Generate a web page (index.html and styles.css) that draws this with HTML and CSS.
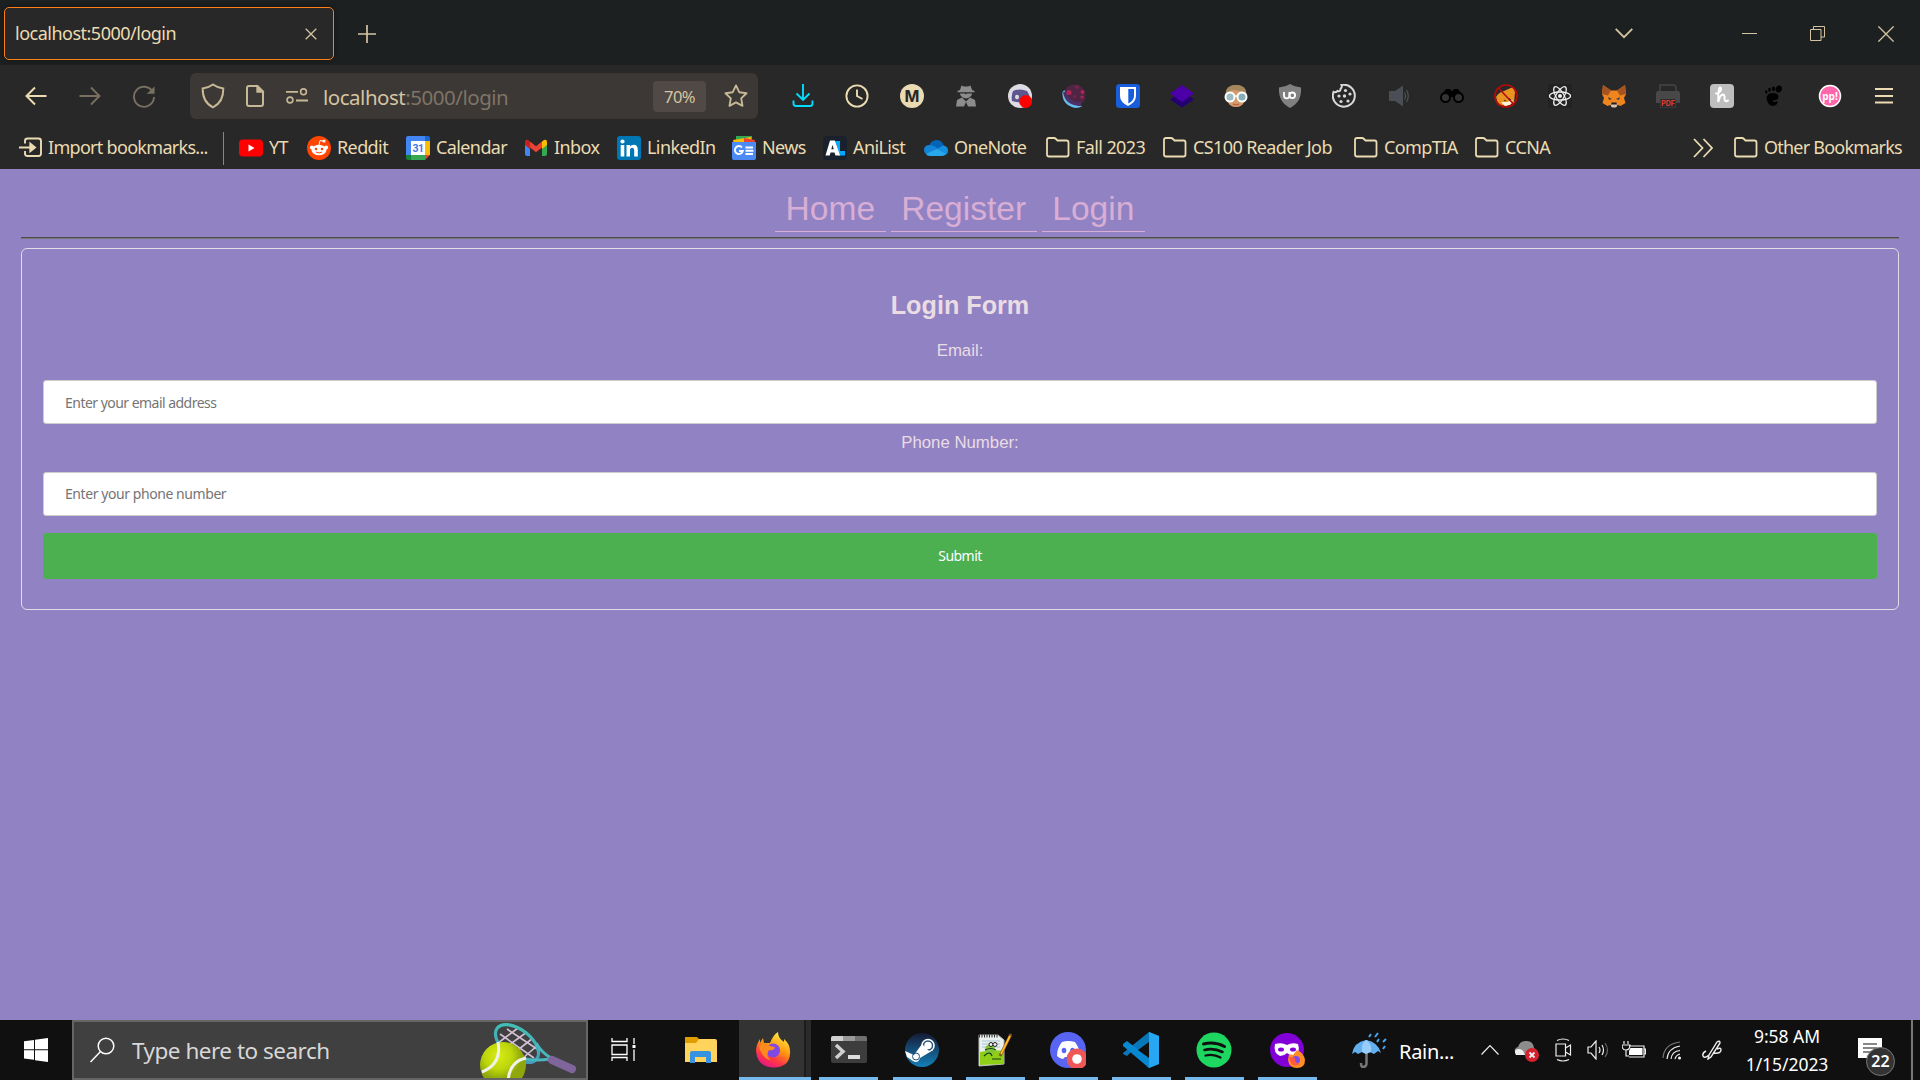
FILE: index.html
```html
<!DOCTYPE html>
<html lang="en">
<head>
<meta charset="utf-8">
<title>localhost:5000/login</title>
<link rel="stylesheet" href="styles.css">
</head>
<body>
<div class="screen">
  <header class="tabbar">
    <div class="tab"><span class="tab-title">localhost:5000/login</span>
      <svg class="line" width="12" height="12" viewBox="0 0 12 12"><path d="M.7.7l10.6 10.6M11.3.7L.7 11.3"/></svg>
    </div>
    <svg class="line new-tab" width="18" height="18" viewBox="0 0 18 18"><path d="M9 0v18M0 9h18" stroke-width="1.7"/></svg>
    <div class="window-controls">
      <svg class="line all-tabs" width="18" height="11" viewBox="0 0 18 11"><path d="M.7.9L9 9.2 17.300.9" stroke-width="1.8"/></svg>
      <svg class="line" width="15" height="15" viewBox="0 0 15 15"><path d="M0 7.500h15" stroke-width="1"/></svg>
      <svg class="line" width="15" height="15" viewBox="0 0 15 15"><path d="M.5 3.500h10.500v11H.5zM3.500 3.500v-3h11v10.500H11" stroke-width="1"/></svg>
      <svg class="line" width="16" height="16" viewBox="0 0 16 16"><path d="M.4.400l15.200 15.200M15.600.400L.400 15.600"/></svg>
    </div>
  </header>

  <div class="toolbar">
    <div class="nav-buttons">
      <svg class="line bright" width="24" height="24" viewBox="0 0 24 24"><path d="M22.500 12H2.500M11 3.500L2.500 12l8.500 8.500" stroke-width="2"/></svg>
      <svg class="line dim" width="24" height="24" viewBox="0 0 24 24"><path d="M1.500 12h20M13 3.500l8.500 8.500-8.500 8.500" stroke-width="1.900"/></svg>
      <svg class="line dim" width="24" height="24" viewBox="0 0 24 24"><path d="M20.500 7.500A10 10 0 1 0 22 13" stroke-width="1.900"/><path d="M22.300 3v6.500h-7z" fill="#777061" stroke-width=".5"/></svg>
    </div>
    <div class="urlbar">
      <svg class="line tan" width="24" height="26" viewBox="0 0 24 26"><path d="M12 1.500c3.200 2.400 6.500 3.400 10.300 3.900C22.500 14 19.500 20.500 12 24.300 4.500 20.500 1.500 14 1.700 5.400 5.500 4.900 8.800 3.900 12 1.500z" stroke-width="2"/></svg>
      <svg class="line tan" width="20" height="24" viewBox="0 0 20 24"><path d="M4 2h8.500L18 7.500V20q0 2-2 2H4q-2 0-2-2V4q0-2 2-2z" stroke-width="2"/><path d="M12 2v6h6z" fill="#c7b896"/></svg>
      <svg class="line tan" width="22" height="16" viewBox="0 0 22 16"><path d="M0 3.800h12M10 12.500h12" stroke-width="1.800"/><circle cx="17.500" cy="3.800" r="2.900" stroke-width="1.600"/><circle cx="4" cy="12" r="2.900" stroke-width="1.600"/></svg>
      <span class="url">localhost<span class="url-rest">:5000/login</span></span>
      <span class="zoom">70%</span>
      <svg class="line tan star" width="24" height="24" viewBox="0 0 24 24"><path d="M12 1.400l3.200 6.800 7.300 1-5.300 5.200 1.300 7.500L12 18.300l-6.500 3.600 1.300-7.500L1.500 9.200l7.300-1z" stroke-width="1.900" stroke-linejoin="round"/></svg>
    </div>
    <div class="extensions">
      <svg class="line" viewBox="0 0 24 24"><path d="M12 0v16M5.500 9.500L12 16l6.500-6.500M2.500 16.500v3q0 2.500 2.500 2.500h14q2.500 0 2.500-2.500v-3" stroke="#00ddff" stroke-width="1.900"/></svg>
      <svg class="line bright" viewBox="0 0 24 24"><circle cx="12" cy="12" r="10.600" stroke-width="1.900"/><path d="M12 5.500V12l5.500 3" stroke-width="1.900"/></svg>
      <svg viewBox="0 0 24 24"><circle cx="12" cy="12" r="12" fill="#ebdbb2"/><text x="12" y="17.500" class="m-letter">M</text></svg>
      <svg viewBox="0 0 24 24" fill="#8c8c8c"><path d="M7.500 1.500L10 2.500h4l2.500-1L18 6l2.500 1v1.300h-17V7L6 6zM6 9.500h5l1 1 1-1h5q0 3.500-6 5-6-1.500-6-5zM3 16l5-2.500 4 4 4-4 5 2.500 1 6.500H14L12 18l-2 4.500H2z"/></svg>
      <svg viewBox="0 0 24 24"><circle cx="12" cy="12" r="12" fill="#dddbe3"/><path d="M5 7q7-3 14 0 4 6 3 10-9 3-18 0Q3 12 5 7z" fill="#5f5690"/><ellipse cx="9" cy="13" rx="2" ry="2.300" fill="#ddd"/><circle cx="17.700" cy="17.500" r="6.500" fill="#f00"/></svg>
      <svg viewBox="0 0 24 24"><circle cx="12.500" cy="11.500" r="11" fill="#502544"/><path d="M.5 8q-1 13 13 16 4 0 7-2Q5 21 2.500 6z" fill="#67bcf0"/><path d="M3 8Q5 20 19 20" fill="none" stroke="#4b3165" stroke-width="4"/><circle cx="7" cy="8.500" r="2.600" fill="#b02458"/><circle cx="12.500" cy="12.500" r="1.500" fill="#752552"/><circle cx="20.500" cy="8" r="2" fill="#b02356"/><circle cx="20" cy="13" r="1.600" fill="#a52556"/><circle cx="15" cy="3" r="2" fill="#74244d"/></svg>
      <svg viewBox="0 0 24 24"><rect width="24" height="24" rx="3.500" fill="#175ddc"/><path d="M4 3h16v9q0 6-8 10Q4 18 4 12z" fill="#fff"/><path d="M12.300 5H18v7q0 4.500-5.700 7.500z" fill="#175ddc"/></svg>
      <svg viewBox="0 0 24 24"><path d="M0 15.500l12-8 12 8-12 8z" fill="#240073"/><path d="M0 9.500L12 1l12 8.500L12 18z" fill="#4b00a8"/></svg>
      <svg viewBox="0 0 24 24"><path d="M3 9q1-8 9-8t9 8l-.5 8q-2 6-8.500 6T3.500 17z" fill="#d59a6b"/><path d="M1.500 10Q1.500 1 12 1t10.500 9L17 7 8 6z" fill="#a4875d"/><circle cx="6" cy="13" r="4.500" fill="#9dbdc0" stroke="#fff" stroke-width="2"/><circle cx="18" cy="13" r="4.500" fill="#85aeb6" stroke="#fff" stroke-width="2"/><path d="M10 12h4" stroke="#fff" stroke-width="1.500"/><path d="M9 20q3 1.500 6 0" stroke="#b85c42" stroke-width="1.200" fill="none"/></svg>
      <svg viewBox="0 0 24 24"><path d="M12 0q4.500 3 11 3.500Q24 18 12 24 0 18 1 3.500 7.500 3 12 0z" fill="#808080"/><path d="M6 8v3.500q0 2.800 2.700 2.800t2.700-2.800V8" fill="none" stroke="#fff" stroke-width="1.800"/><circle cx="14.300" cy="11.300" r="2.800" fill="none" stroke="#fff" stroke-width="1.800"/></svg>
      <svg viewBox="0 0 24 24"><path d="M9.500 1A11 11 0 1 1 1.500 8q2 1 4-1 3 1 3-2 2-2 1-4z" fill="none" stroke="#d8d8d8" stroke-width="2"/><g fill="#d8d8d8"><circle cx="7" cy="12" r="1.600"/><circle cx="13.500" cy="6.500" r="1.600"/><circle cx="12.500" cy="12" r="1.700"/><circle cx="18" cy="10" r="1.600"/><circle cx="9" cy="17.500" r="1.600"/><circle cx="16" cy="17" r="1.600"/></g></svg>
      <svg viewBox="0 0 24 24"><path d="M3 7h6l8-5.500v21L9 17H3z" fill="#4b4f55"/><path d="M18.500 8.500q2 3.500 0 7M20.500 6q3.500 6 0 12" fill="none" stroke="#4b4f55" stroke-width="1.300"/></svg>
      <svg viewBox="0 0 24 24"><path d="M2 10l4-5h4l1.500 2h1L14 5h4l4 5v3H2z" fill="#000"/><circle cx="5.500" cy="13.500" r="4.500" fill="#333" stroke="#000" stroke-width="2"/><circle cx="18.500" cy="13.500" r="4.500" fill="#333" stroke="#000" stroke-width="2"/></svg>
      <svg viewBox="0 0 24 24"><path d="M2 13q3-5 8-6l9-4 2 5-1 11-8 3-8-1z" fill="#e99420"/><path d="M2 13l5 5 6 0 6-2-3 5-5 1z" fill="#fff3dd"/><path d="M6 13q5-1 8-6l4 9-8 1z" fill="#e99420"/><path d="M10 16l2 1M15 14l2 2" stroke="#333"/><circle cx="12" cy="12" r="11" fill="none" stroke="#b30b0b" stroke-width="1.700"/><path d="M4.500 4l15 16" stroke="#b30b0b" stroke-width="1.700"/></svg>
      <svg viewBox="0 0 24 24"><rect width="24" height="24" fill="#222"/><g fill="none" stroke="#eee" stroke-width="1.300"><ellipse cx="12" cy="12" rx="10.500" ry="4"/><ellipse cx="12" cy="12" rx="10.500" ry="4" transform="rotate(60 12 12)"/><ellipse cx="12" cy="12" rx="10.500" ry="4" transform="rotate(120 12 12)"/></g><circle cx="12" cy="12" r="2" fill="#eee"/></svg>
      <svg viewBox="0 0 24 24"><path d="M1 1l8 5.500h6L23 1l1 9-2 4 1.500 5-5 3-4-1.500h-5L5.500 22l-5-3L2 14 0 10z" fill="#f0851e"/><path d="M1 1l8 5.500-3 5L0 10zM23 1l-8 5.500 3 5 6-1.500z" fill="#a55320"/><path d="M6 13l4 2-3 1zM18 13l-4 2 3 1z" fill="#35404b"/><path d="M8.500 19h7l-.5 3.500-1.500 1h-3l-1.500-1z" fill="#d8c3b2"/><path d="M9.500 18.500h5l.5 2H9z" fill="#202020"/></svg>
      <svg viewBox="0 0 24 24"><path d="M4 7V1h14l2 2v4" fill="none" stroke="#454545" stroke-width="1.500"/><path d="M2 7h20q2 0 2 2v10h-4v4.500H4V19H0V9q0-2 2-2z" fill="#484848"/><rect x="4.500" y="15" width="15" height="8" fill="#292929"/><text x="12" y="22" class="pdf-letter">PDF</text></svg>
      <svg viewBox="0 0 24 24"><rect width="24" height="24" rx="4" fill="#bebebe"/><path d="M6 9.500q5-1 5-4.500 0-1.800-1.200-1.500Q8 4 8.300 18q1.700-7.500 4.700-7.500 2 .5 1.500 4-.5 4 3.500 2" fill="none" stroke="#fff" stroke-width="2" stroke-linecap="round"/></svg>
      <svg viewBox="0 0 24 24"><path d="M2.500 14q1-5 6-5 6 0 6 4 0 3-4 3-3 1-1 2 2 0 4-1 1 4-5 5-5-1-6-8z"/><ellipse cx="14.800" cy="5" rx="3" ry="3.600" transform="rotate(25 14.800 5)"/><ellipse cx="9.500" cy="4.800" rx="1.600" ry="2.400"/><ellipse cx="5.500" cy="5.800" rx="1.300" ry="2.100"/><ellipse cx="2.300" cy="8" rx="1.200" ry="1.800"/></svg>
      <svg viewBox="0 0 24 24"><circle cx="12" cy="12" r="10.500" fill="#ff66ab" stroke="#fff" stroke-width="1.500"/><text x="12" y="15.500" class="pp-letter">pp!</text></svg>
      <svg class="line bright" viewBox="0 0 24 24"><path d="M3 5h18M3 12h18M3 18.500h18" stroke-width="1.900"/></svg>
    </div>
  </div>

  <nav class="bookmarks">
    <div class="bookmark import"><svg class="line bright" viewBox="0 0 24 24"><path d="M7 7.500V5q0-2.500 2.500-2.500h11Q23 2.500 23 5v12.500q0 2.500-2.500 2.500h-11Q7 20 7 17.500V15" stroke-width="1.900"/><path d="M1 11.500h14" stroke-width="2"/><path d="M12 7l5.500 4.500L12 16z" fill="#ebdbb2"/></svg><span>Import bookmarks...</span></div>
    <div class="bookmark"><svg viewBox="0 0 24 24"><rect y="3.500" width="24" height="17" rx="4" fill="#f00"/><path d="M9.500 8.500l6 3.500-6 3.500z" fill="#fff"/></svg><span>YT</span></div>
    <div class="bookmark"><svg viewBox="0 0 24 24"><circle cx="12" cy="12" r="12" fill="#ff4500"/><g fill="#fff"><ellipse cx="12" cy="14" rx="7.500" ry="5.200"/><circle cx="4.800" cy="11.500" r="1.900"/><circle cx="19.200" cy="11.500" r="1.900"/><circle cx="17" cy="5" r="1.600"/></g><path d="M12 9l1-4.500 4 .8" fill="none" stroke="#fff"/><g fill="#ff4500"><circle cx="9" cy="13" r="1.300"/><circle cx="15" cy="13" r="1.300"/></g><path d="M9 16q3 2 6 0" stroke="#ff4500" fill="none"/></svg><span>Reddit</span></div>
    <div class="bookmark"><svg viewBox="0 0 24 24"><path d="M2 0h17v5H5v14H0V2q0-2 2-2z" fill="#4285f4"/><path d="M19 0h3q2 0 2 2v3h-5z" fill="#1967d2"/><path d="M19 5h5v14h-5z" fill="#fbbc04"/><path d="M0 19h5v5H2q-2 0-2-2z" fill="#188038"/><path d="M5 19h14v5H5z" fill="#34a853"/><path d="M19 19h5l-5 5z" fill="#ea4335"/><path d="M5 5h14v14H5z" fill="#fff"/><text x="12" y="16" class="cal-letter">31</text></svg><span>Calendar</span></div>
    <div class="bookmark"><svg viewBox="0 0 24 24"><path d="M1 6l5 3.500V20H3q-2 0-2-2z" fill="#4285f4"/><path d="M23 6l-5 3.500V20h3q2 0 2-2z" fill="#34a853"/><path d="M18 5.500l2-1.500q3-1 3 2v3l-5 4z" fill="#fbbc04"/><path d="M6 5.500L4 4Q1 3 1 6v3l5 4z" fill="#c5221f"/><path d="M6 5.500l6 4.700 6-4.700V11.500l-6 4.700-6-4.700z" fill="#ea4335"/></svg><span>Inbox</span></div>
    <div class="bookmark"><svg viewBox="0 0 24 24"><rect width="24" height="24" rx="3" fill="#0077b5"/><g fill="#fff"><circle cx="5.500" cy="5.500" r="2.100"/><path d="M3.700 9h3.600v11.500H3.700zM9.500 9H13v1.600q1.200-1.900 3.600-1.900 4.200 0 4.200 5v6.800h-3.600v-6q0-2.700-1.900-2.700-2.300 0-2.300 2.700v6H9.500z"/></g></svg><span>LinkedIn</span></div>
    <div class="bookmark"><svg viewBox="0 0 24 24"><path d="M4 0h16v6H4z" fill="#34a853"/><path d="M1 4l18-3 1 7H2z" fill="#fbbc04"/><path d="M12 2l11 2-1 5H12z" fill="#ea4335"/><path d="M0 6h24v16q0 2-2 2H2q-2 0-2-2z" fill="#4c8bf5"/><path d="M10 11.500a4 4 0 1 0 .8 3.500H7M13.500 11.500H21M13.500 14.700h8M13.500 18H21" fill="none" stroke="#fff" stroke-width="1.900"/></svg><span>News</span></div>
    <div class="bookmark"><svg viewBox="0 0 24 24"><rect width="24" height="24" rx="4" fill="#19212d"/><path d="M12.500 5H17v10h5v4.500h-6z" fill="#02a9ff"/><path fill-rule="evenodd" d="M7 4.500h5l5 15h-4.500l-1-3h-4l-.8 3H2.500zM9.500 9l-1.200 4.300h2.500z" fill="#fff"/></svg><span>AniList</span></div>
    <div class="bookmark"><svg viewBox="0 0 24 24"><path d="M5 10q2-6 8-6 5 0 7 6l-8 5z" fill="#0364b8"/><path d="M5 19Q0 18 0 14q0-5 6-5 4 0 9 5z" fill="#1484d7"/><path d="M13 13l6-3.500q5 .5 5 5t-5 5z" fill="#1490df"/><path d="M2 18l11-5 9 5q-2 2-4 2H6q-3 0-4-2z" fill="#28a8ea"/></svg><span>OneNote</span></div>
    <div class="bookmark"><svg class="line bright folder"><use href="#folder"/></svg><span>Fall 2023</span></div>
    <div class="bookmark"><svg class="line bright folder"><use href="#folder"/></svg><span>CS100 Reader Job</span></div>
    <div class="bookmark"><svg class="line bright folder"><use href="#folder"/></svg><span>CompTIA</span></div>
    <div class="bookmark"><svg class="line bright folder"><use href="#folder"/></svg><span>CCNA</span></div>
    <svg class="line bright more" width="20" height="20" viewBox="0 0 20 20"><path d="M1 1l8.500 9L1 19M10.500 1l8.500 9-8.500 9" stroke-width="1.800"/></svg>
    <div class="bookmark other"><svg class="line bright folder" viewBox="0 0 24 24"><g id="folder"><path d="M1 18.500V4q0-2 2-2h5q1 0 2 1l1.500 1.500h9q2 0 2 2v12q0 2-2 2H3q-2 0-2-2z" stroke-width="1.800"/></g></svg><span>Other Bookmarks</span></div>
  </nav>

  <main class="page">
    <div class="links"><a>Home</a><a>Register</a><a>Login</a></div>
    <hr>
    <form class="login-form">
      <h2>Login Form</h2>
      <label>Email:</label>
      <input type="text" placeholder="Enter your email address">
      <label>Phone Number:</label>
      <input type="text" placeholder="Enter your phone number" class="phone">
      <button type="button">Submit</button>
    </form>
  </main>

  <footer class="taskbar">
    <div class="start"><svg width="24" height="24" viewBox="0 0 24 24" fill="#fff"><path d="M0 3.300L10 2v9.300H0zM11 1.800L24 0v11.300H11zM0 12.300h10v9.500L0 20.500zM11 12.300h13V24l-13-1.800z"/></svg></div>
    <div class="search">
      <svg width="26" height="26" viewBox="0 0 26 26" fill="none" stroke="#fff" stroke-width="1.500"><circle cx="16" cy="9" r="7.800"/><path d="M10.500 14.500L.500 25"/></svg>
      <span>Type here to search</span>
      <svg class="tennis" width="98" height="56" viewBox="0 -2 98 56">
        <defs><radialGradient id="ball" cx=".4" cy=".3"><stop stop-color="#d9ec13"/><stop offset=".6" stop-color="#bdd60c"/><stop offset="1" stop-color="#8fa70c"/></radialGradient><linearGradient id="hoop" x2="1" y2="1"><stop stop-color="#3fc6b4"/><stop offset="1" stop-color="#4694bd"/></linearGradient></defs>
        <path d="M20 10l34 24M27 5l33 22M17 17l30 21M38 4L18 19M47 8L25 24M53 14L34 29M58 21L43 34" stroke="#d2c0d5" stroke-width="1.600"/>
        <ellipse cx="37" cy="19.500" rx="25" ry="14" transform="rotate(38 37 19.500)" fill="none" stroke="url(#hoop)" stroke-width="3.200"/>
        <path d="M56 19q6 10 15 15M45 35q12 2 25 0" stroke="#48b6bd" stroke-width="3" fill="none"/>
        <path d="M72 36l20 9" stroke="#80649c" stroke-width="8" stroke-linecap="round"/>
        <circle cx="23" cy="41" r="23" fill="url(#ball)"/><path d="M18 18q4 22-16 30M46 34Q28 38 28 60" fill="none" stroke="#f0f2e8" stroke-width="3"/>
      </svg>
    </div>
    <div class="apps">
      <div class="app"><svg viewBox="0 0 36 36" fill="none" stroke="#fff" stroke-width="1.300"><path d="M6 6v3.500h15V6M6 29v-3.500h15V29M6 13h15v9.500H6zM28 6v6M28 17.500V29"/><path d="M26.500 13h3v3h-3z" fill="#fff" stroke="none"/></svg></div>
      <div class="app"><svg viewBox="0 0 36 36"><path d="M4 5h12l3 3-2 4H4z" fill="#e09d00"/><path d="M4 11h11l3-4h16q2 0 2 2v21H4z" fill="#ffd35c"/><path d="M9 31V21q0-2 2-2h17q2 0 2 2v10h-5v-6H14v6z" fill="#3792df"/></svg></div>
      <div class="app active"><svg viewBox="0 0 36 36"><defs><linearGradient id="fire" x1=".8" y1="0" x2=".3" y2="1"><stop stop-color="#fff44f"/><stop offset=".45" stop-color="#ff980e"/><stop offset=".75" stop-color="#ff3647"/><stop offset="1" stop-color="#e31587"/></linearGradient></defs><path d="M23 0q0 6 6 10v-3q7 6 6 15-1 13-16 13.500Q2 35 1 19q0-6 4-12v4l3-5 1 5h6q3-8 8-11z" fill="url(#fire)"/><circle cx="18" cy="18.500" r="7" fill="#8049e6"/><path d="M4 14q6-3 9-1 4 2 7 2-1 4-6 3-4 6 2 10Q7 27 4 14z" fill="#ff8b1c"/></svg></div>
      <div class="app running"><svg viewBox="0 0 36 36"><rect y="4" width="36" height="27" rx="2" fill="#3d3d3d"/><path d="M0 9V6q0-2 2-2h10v5z" fill="#d0d0d0"/><path d="M12 4h12v5H12z" fill="#999"/><path d="M24 4h10q2 0 2 2v3H24z" fill="#707070"/><path d="M5 13l7 6.500L5 26" fill="none" stroke="#d0d0d0" stroke-width="3.500"/><path d="M17 23h12v4H17z" fill="#ddd"/></svg></div>
      <div class="app running"><svg viewBox="0 0 36 36"><defs><linearGradient id="steam" x2="0" y2="1"><stop stop-color="#171a36"/><stop offset="1" stop-color="#1480b8"/></linearGradient></defs><circle cx="18" cy="18" r="17" fill="url(#steam)"/><circle cx="24" cy="13.500" r="6.800" fill="#fff"/><circle cx="24" cy="13.500" r="4.500" fill="none" stroke="#27517a" stroke-width="1.500"/><path d="M1 19l9 4 8-11 8 8-10 6q-2 6-7 3L3 25z" fill="#fff"/><circle cx="12" cy="24.500" r="3.500" fill="none" stroke="#27517a" stroke-width="1"/></svg></div>
      <div class="app running"><svg viewBox="0 0 36 36"><path d="M2 3h19l6 5v24L2 34z" fill="#e9f0ee" stroke="#bbb"/><path d="M3 20q12-3 24-1v13L3 33z" fill="#8fcf18"/><path d="M2 4h20" stroke="#333" stroke-width="3" stroke-dasharray="1 1.500"/><path d="M5 9h18M5 12h18M5 15h18" stroke="#a7c7d9"/><circle cx="13" cy="17.500" r="5" fill="#81c43c"/><g fill="#eee" stroke="#222"><circle cx="14" cy="12.500" r="2"/><circle cx="18" cy="12.500" r="2"/></g><path d="M8 18q6-3 11 0M7 24q6-6 8 0M15 27h9" fill="none" stroke="#183a10" stroke-width="1.200"/><path d="M34 2L23 24" stroke="#8b5317" stroke-width="3"/><path d="M33 4L24 22" stroke="#ffbd2c" stroke-width="1.800"/></svg></div>
      <div class="app running"><svg viewBox="0 0 36 36"><circle cx="18" cy="18" r="18" fill="#5865f2"/><path d="M12 10q6-2 13 0 5 7 5 14-3 3-6 3l-2-2h-7l-2 2q-3 0-6-3 0-8 5-14z" fill="#fff"/><g fill="#5865f2"><ellipse cx="14" cy="18.500" rx="2.300" ry="2.700"/><ellipse cx="22.500" cy="18.500" rx="2.300" ry="2.700"/></g><circle cx="27" cy="27" r="10.500" fill="#ef5757"/><circle cx="27" cy="27" r="4.800" fill="#fff"/></svg></div>
      <div class="app running"><svg viewBox="0 0 36 36"><path d="M26 0L36 4v28l-10 4L9 19l-5 5-4-2v-1l26-21z" fill="#0877b9"/><path d="M0 14v-2l4-3 5 4 17 13v10L0 14z" fill="#0788d1"/><path d="M26 0l10 4v28l-10 4z" fill="#27a7f2"/><path d="M26 10L15 18l11 8z" fill="#101010"/></svg></div>
      <div class="app running"><svg viewBox="0 0 36 36"><circle cx="18" cy="18" r="17.500" fill="#1ed760"/><g fill="none" stroke="#101010" stroke-linecap="round"><path d="M7.500 12q11-3 21 2.500" stroke-width="3"/><path d="M8.500 18q9-2.500 18 2" stroke-width="2.600"/><path d="M9.500 23.500q8-2 15 2" stroke-width="2.300"/></g></svg></div>
      <div class="app running"><svg viewBox="0 0 36 36"><circle cx="18" cy="18" r="17" fill="#8000d7"/><path d="M18 13q5-3 11-1 3 9-4 12-4 0-7-3-3 3-7 3-7-3-5-12 7-2 12 1z" fill="#fff"/><ellipse cx="12" cy="17.500" rx="3" ry="2" fill="#8000d7"/><ellipse cx="24" cy="17.500" rx="3" ry="2" fill="#8000d7"/><path d="M28 18q7 3 8 10 0 8-8 8t-9-8l1-6 4 1z" fill="#ff8d25"/><circle cx="27" cy="28" r="4" fill="#814bea"/><path d="M20 25l6 1q0 6 5 6-9 5-11-7z" fill="#ff5940"/></svg></div>
    </div>
    <div class="weather"><svg width="36" height="36" viewBox="0 0 36 36"><path d="M14.500 8v23q0 4-3.500 4-2 0-2-4" fill="none" stroke="#777" stroke-width="2.500"/><path d="M0 22Q2 10 14 8q12 2 15 13l-3-2-4 3-4-2-4 2-4-2-4 2-3-2z" fill="#62aff0"/><path d="M10 20Q9 11 14 8q6 3 5 12l-5 2z" fill="#97cdfa"/><path d="M19 2l-2 3M26 1l-3 4M27 7l-2 3M34 7l-3 3M33 14l-2 3" stroke="#46a5ee" stroke-width="2"/></svg><span>Rain...</span></div>
    <div class="tray">
      <svg width="18" height="12" viewBox="0 0 18 12"><path d="M.5 10.500L9 1.500l8.500 9"/></svg>
      <svg width="25" height="24" viewBox="0 0 25 24"><path d="M3 17Q-2 11 4 9q2-7 9-6 6 0 7 7 4 2 3 7z" fill="#8c8c8c" stroke="none"/><path d="M2 17q-3-5 2-6 5-1 7 6z" fill="#eee" stroke="none"/><circle cx="18" cy="17" r="7" fill="#d4212d" stroke="none"/><path d="M15.500 14.500l5 5m0-5l-5 5" stroke-width="1.800"/></svg>
      <svg width="17" height="24" viewBox="0 0 17 24"><path d="M2 2.500q6-3 12 0M2 21.500q6 3 12 0M1 6h9.500v12H1zM10.500 10l5-3v10l-5-3"/></svg>
      <svg width="23" height="20" viewBox="0 0 23 20"><path d="M1 7v6h3l5 6V1L4 7zM12 7q2 3 0 6M15 5q3 5 0 10"/><path d="M18 3q5 7 0 14" stroke="#666"/></svg>
      <svg width="24" height="20" viewBox="0 0 24 20"><path d="M2 1v3M6 1v3M0 5h8q0 5-4 5t-4-5M4 10v6h3M7 6h15v11H7M22 9h1.500v5H22"/><path d="M8.500 8h12v7H7v-4z" fill="#fff" stroke="none"/></svg>
      <svg width="20" height="20" viewBox="0 0 20 20"><path d="M1 18Q2 4 18 2" stroke="#777"/><path d="M5 19Q6 8 18 6M9 19q1-8 9-8.500M13 19q1-4 5-5"/><circle cx="17.500" cy="18" r="1.500" fill="#fff" stroke="none"/></svg>
      <svg width="20" height="20" viewBox="0 0 20 20"><path d="M15 2q3-2 3 1L9 17l-3 2 1-4zM4 11q-4 2-3 5t6-1M11 13q8 1 8-3 0-3-4-1" stroke-width="1.400"/></svg>
    </div>
    <div class="clock"><span>9:58 AM</span><span>1/15/2023</span></div>
    <div class="notices"><svg width="26" height="27" viewBox="0 0 26 27"><path d="M0 0h24v20h-8l-5 5v-5H0z" fill="#fff"/><path d="M5 6h14M5 10h14M5 14h9" stroke="#111" stroke-width="1.200"/></svg><span class="badge">22</span></div>
  </footer>
</div>
</body>
</html>
```
FILE: styles.css
```css
* { box-sizing: border-box; }

body {
  margin: 0;
  background: #9182c3;
  font-family: "Noto Sans", "Open Sans", sans-serif;
}

.screen {
  display: flex;
  flex-direction: column;
  width: 1920px;
  height: 1080px;
  overflow: hidden;
}

svg { display: block; flex: none; }
.line { fill: none; stroke: #d5c4a1; stroke-width: 1.3; }
.line.bright { stroke: #ebdbb2; }
.line.dim { stroke: #777061; }
.line.tan { stroke: #c7b896; }

/* Tab strip */
.tabbar {
  display: flex;
  align-items: center;
  height: 65px;
  padding: 2px 26px 0 4px;
  background: #1d2021;
}
.tab {
  display: flex;
  align-items: center;
  justify-content: space-between;
  width: 330px;
  height: 53px;
  padding: 0 16px 0 10px;
  border: 1px solid #fe8019;
  border-radius: 5px;
  background: #282828;
  box-shadow: 0 0 4px #111;
}
.tab-title {
  padding-bottom: 2px;
  color: #ebdbb2;
  font-size: 18px;
  letter-spacing: -.5px;
}
.new-tab { margin-left: 24px; }
.window-controls {
  display: flex;
  align-items: center;
  gap: 53px;
  margin-left: auto;
}
.all-tabs { margin-right: 56px; }

/* Navigation toolbar */
.toolbar {
  display: flex;
  align-items: center;
  height: 62px;
  background: #282828;
}
.nav-buttons {
  display: flex;
  gap: 30px;
  width: 190px;
  padding-left: 24px;
}
.urlbar {
  display: flex;
  align-items: center;
  width: 568px;
  height: 46px;
  padding: 0 10px 0 11px;
  border-radius: 6px;
  background: #3c3836;
}
.urlbar svg:nth-child(2) { margin-left: 20px; }
.urlbar svg:nth-child(3) { margin-left: 21px; }
.url {
  margin-left: 15px;
  padding-top: 1px;
  color: #d5c4a1;
  font-size: 20.500px;
  letter-spacing: -.48px;
}
.url-rest { color: #7f7466; }
.zoom {
  width: 53px;
  height: 31px;
  margin-left: auto;
  border-radius: 4px;
  background: #504945;
  color: #d5c4a1;
  font-size: 16.500px;
  line-height: 32px;
  text-align: center;
  letter-spacing: -.5px;
}
.star { margin-left: 18px; }
.extensions {
  display: flex;
  gap: 30px;
  margin-left: 33px;
}
.extensions svg { width: 24px; height: 24px; }
.extensions svg:nth-child(n+3) { position: relative; left: 1px; }
.m-letter { font: 700 16px Inter, sans-serif; text-anchor: middle; fill: #282828; }
.pdf-letter { font: 700 7px Inter, sans-serif; text-anchor: middle; fill: #e53b32; }
.pp-letter { font: 700 10px "Open Sans", sans-serif; text-anchor: middle; fill: #fff; }
.cal-letter { font: 700 10.500px Roboto, sans-serif; text-anchor: middle; fill: #3c78e6; }

/* Bookmarks toolbar */
.bookmarks {
  display: grid;
  grid-template-columns: 221px 68px 99px 118px 93px 115px 91px 101px 122px 117px 191px 121px 218px 41px 180px;
  align-items: center;
  height: 42px;
  padding-left: 18px;
  background: #282828;
}
.bookmark {
  display: flex;
  align-items: center;
  gap: 6px;
  color: #ebdbb2;
  font-size: 18px;
  line-height: 24px;
  letter-spacing: -.6px;
  white-space: nowrap;
}
.bookmark span { padding-bottom: 2px; }
.bookmark svg { width: 24px; height: 24px; }
.import {
  width: 206px;
  height: 33px;
  border-right: 1px solid #928374;
  letter-spacing: -.7px;
}
.other { letter-spacing: -.78px; }

/* Page content */
.page {
  height: 851px;
  padding: 18px 21px 0;
  background: #9182c3;
  font-family: "Liberation Sans", Arial, sans-serif;
}
.links {
  display: flex;
  justify-content: center;
  gap: 5px;
}
.links a {
  height: 45px;
  padding: 0 10.500px;
  border-bottom: 1px solid #d8aed5;
  color: #d8aed5;
  font-size: 33.600px;
  line-height: 43px;
}
hr {
  height: 2px;
  margin: 5px 0 9px;
  border: 0;
  border-top: 1px solid #4d4d4d;
  background: #777;
}
.login-form {
  display: flex;
  flex-direction: column;
  height: 362px;
  padding: 42px 21px 0;
  border: 1px solid #e4dce6;
  border-radius: 6px;
  color: #eadce3;
  text-align: center;
}
h2 {
  height: 29px;
  margin: 0 0 19px;
  font-size: 25.200px;
  line-height: 29px;
}
label {
  height: 24px;
  font-size: 16.800px;
  line-height: 24px;
}
input {
  height: 44px;
  margin: 17px 0 7px;
  padding: 0 21px;
  border: 1px solid #ccc;
  border-radius: 3px;
  background: #fff;
  font: 14px "Noto Sans", sans-serif;
  letter-spacing: -.53px;
}
input::placeholder { color: #757575; }
input.phone { margin-bottom: 17px; padding-bottom: 2px; letter-spacing: -.43px; }
button {
  height: 46px;
  padding-bottom: 3px;
  border: 0;
  border-radius: 3px;
  background: #4caf50;
  color: #fff;
  font: 14px "Noto Sans", sans-serif;
  letter-spacing: -.55px;
}

/* Taskbar */
.taskbar {
  display: flex;
  height: 60px;
  background: #101010;
  color: #fff;
}
.start {
  display: grid;
  place-items: center;
  width: 72px;
}
.search {
  display: flex;
  align-items: center;
  width: 516px;
  padding: 0 8px 0 16px;
  border: 2px solid #666;
  background: #404040;
}
.search span {
  margin: 1px 0 0 16px;
  color: #d7d7d7;
  font-size: 22.500px;
  letter-spacing: -.5px;
}
.tennis { margin-left: auto; }
.apps {
  display: grid;
  grid-template-columns: 78px 73px 72px 75px repeat(6, 73px);
  width: 736px;
}
.app {
  display: flex;
  justify-content: center;
  padding: 12px 7px 0 0;
}
.app svg { width: 36px; height: 36px; }
.running::after, .active::after { content: ""; height: 3px; background: #76b9ed; }
.running, .active {
  display: grid;
  grid-template-rows: 45px 3px;
  justify-items: center;
  padding-right: 0;
}
.running::after { width: 59px; }
.running:nth-child(n+5) svg { margin-right: 2px; }
.active { background: linear-gradient(90deg, #333 65px, #1c1c1c 65px 67px, #2a2a2a 67px); }
.active::after { width: 72px; }
.active svg { margin-right: 4px; }
.weather {
  display: flex;
  align-items: center;
  gap: 11px;
  width: 157px;
  padding-left: 28px;
  font-size: 20px;
  letter-spacing: -.3px;
}
.weather span { padding-top: 3px; }
.tray {
  display: grid;
  grid-template-columns: 33px 41px 32px 35px 40px 40px 20px;
  align-items: center;
  width: 241px;
}
.tray svg { fill: none; stroke: #eee; stroke-width: 1.200; }
.clock {
  display: flex;
  flex-direction: column;
  align-items: center;
  width: 130px;
  padding-top: 2px;
  font-size: 17.500px;
  line-height: 28px;
  letter-spacing: -.05px;
}
.notices {
  position: relative;
  width: 61px;
  margin-right: 6px;
  padding: 18px 0 0 6px;
  border-right: 2px solid #777;
}
.badge {
  position: absolute;
  top: 27px;
  left: 14px;
  width: 29px;
  height: 29px;
  border: 1px solid #777;
  border-radius: 50%;
  background: #333;
  font-size: 16px;
  font-weight: 600;
  line-height: 27px;
  text-align: center;
}
```
